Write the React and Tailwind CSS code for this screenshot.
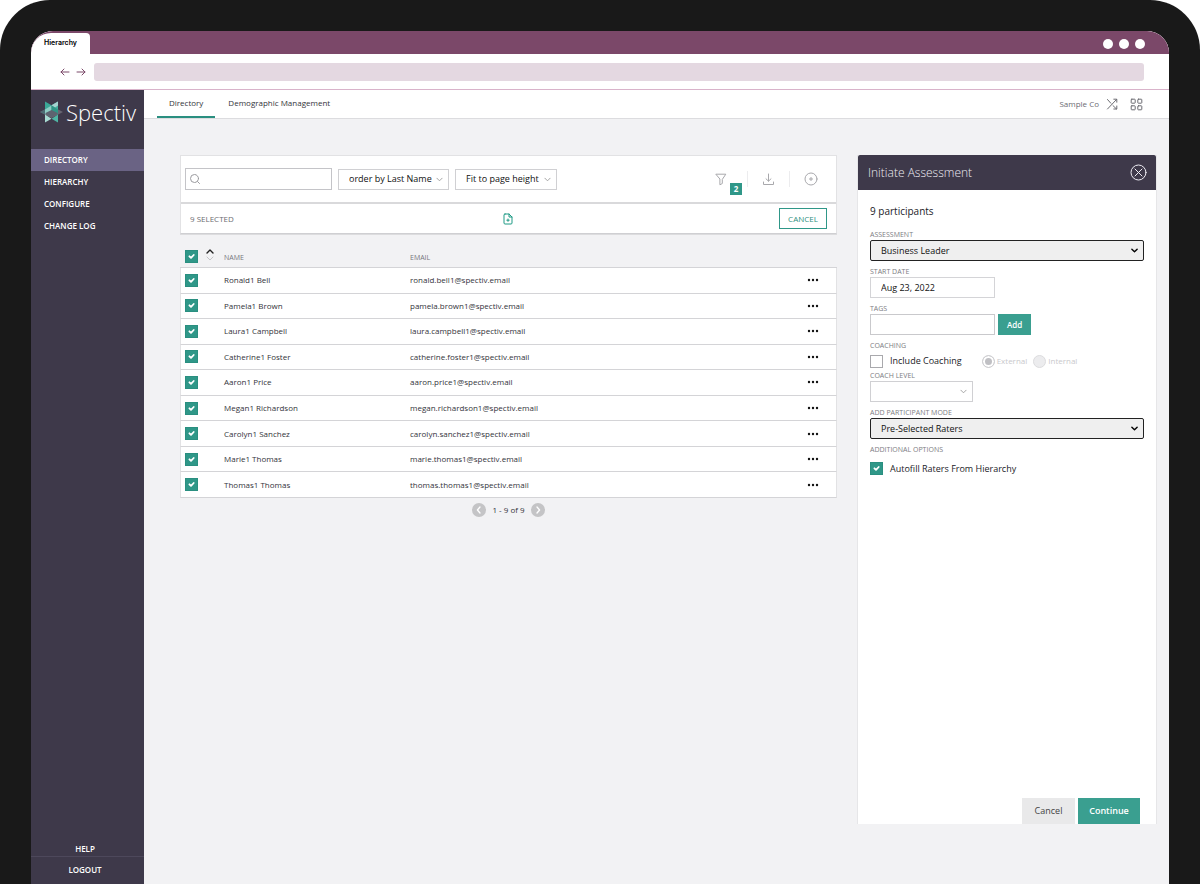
import React from "react";

const people = [
  ["Ronald1 Bell", "ronald.bell1@spectiv.email"],
  ["Pamela1 Brown", "pamela.brown1@spectiv.email"],
  ["Laura1 Campbell", "laura.campbell1@spectiv.email"],
  ["Catherine1 Foster", "catherine.foster1@spectiv.email"],
  ["Aaron1 Price", "aaron.price1@spectiv.email"],
  ["Megan1 Richardson", "megan.richardson1@spectiv.email"],
  ["Carolyn1 Sanchez", "carolyn.sanchez1@spectiv.email"],
  ["Marie1 Thomas", "marie.thomas1@spectiv.email"],
  ["Thomas1 Thomas", "thomas.thomas1@spectiv.email"],
];

function Stroke({ className, children, width = 1, box = "0 0 16 16" }) {
  return (
    <svg
      viewBox={box}
      className={className}
      fill="none"
      stroke="currentColor"
      strokeWidth={width}
      strokeLinecap="round"
      strokeLinejoin="round"
      aria-hidden="true"
    >
      {children}
    </svg>
  );
}

function Check({ label, checked = false }) {
  return (
    <span className="grid size-[13px] shrink-0">
      <input
        type="checkbox"
        aria-label={label}
        defaultChecked={checked}
        className="peer col-start-1 row-start-1 size-[13px] appearance-none border border-[#a9a9ad] bg-white checked:border-[#2a8f80] checked:bg-[#2f9788]"
      />
      <Stroke
        box="0 0 13 13"
        width={1.8}
        className="pointer-events-none invisible col-start-1 row-start-1 size-[13px] text-white peer-checked:visible"
      >
        <path d="M4.4 6.3 6 7.9 8.7 5" />
      </Stroke>
    </span>
  );
}

function Select({ label, value, wide = false, className, id }) {
  return (
    <span className={`grid items-center ${className}`}>
      <select
        id={id}
        aria-label={label}
        className={
          wide
            ? "col-start-1 row-start-1 h-[21px] w-full appearance-none rounded-xs border border-[#222] bg-[#efefef] pl-[10px] text-[9px] font-medium text-[#111]"
            : "col-start-1 row-start-1 h-[21px] w-full appearance-none border border-[#d0d0d3] bg-white pl-[10px] text-[9px] font-medium text-[#111]"
        }
      >
        <option>{value}</option>
      </select>
      {wide ? (
        <Stroke width={1.6} box="0 0 8 8" className="pointer-events-none col-start-1 row-start-1 mr-[6px] size-[7px] justify-self-end text-black">
          <path d="M1 2.5 4 5.5 7 2.5" />
        </Stroke>
      ) : (
        <Stroke box="0 0 8 8" className="pointer-events-none col-start-1 row-start-1 mr-[6px] size-[7px] justify-self-end text-[#999]">
          <path d="M1 2.5 4 5.5 7 2.5" />
        </Stroke>
      )}
    </span>
  );
}

function Logo() {
  return (
    <div className="flex h-[59px] items-start gap-[3px] pt-[10px] pl-[9px]">
      <svg viewBox="0 0 23 24" className="h-6 w-[23px] shrink-0" aria-hidden="true">
        <path d="M0 12 11.5 6 23 12 11.5 18Z" fill="#686672" />
        <path d="M5 1.5 11.5 5.2V12H5Z" fill="#3aa796" />
        <path d="M18 1.5 11.5 5.2V12H18Z" fill="#43ad9c" />
        <path d="M18 1.5 11.5 5.2 15 7.4 18 5.6Z" fill="#a5d3d0" />
        <path d="M5 9.4 11.5 5.6V12L5 14.6Z" fill="#8fcdc4" />
        <path d="M11.5 5.6 18 9.4V14.6L11.5 12Z" fill="#2f9686" />
        <path d="M5 14.6 11.5 18.8 5 22.5Z" fill="#a8dcd3" />
        <path d="M18 14.6 11.5 18.8 18 22.5Z" fill="#4fb5a4" />
        <path d="M5 13.2 11.5 9.9 18 13.2 11.5 17Z" fill="#5d6370" />
        <path d="M0 12 5 9.4V14.6Z" fill="#4d6b73" />
      </svg>
      <span className="text-[22px] leading-[25px] font-light text-white">Spectiv</span>
    </div>
  );
}

function Sidebar() {
  return (
    <aside className="flex w-[113px] shrink-0 flex-col bg-[#3e394a] text-[8px] font-semibold text-white">
      <Logo />
      <nav className="flex flex-col">
        <a href="#directory" className="flex h-[22px] items-center bg-[#6a6384] pl-[13px]">DIRECTORY</a>
        <a href="#hierarchy" className="flex h-[22px] items-center pl-[13px]">HIERARCHY</a>
        <a href="#configure" className="flex h-[22px] items-center pl-[13px]">CONFIGURE</a>
        <a href="#changelog" className="flex h-[22px] items-center pl-[13px]">CHANGE LOG</a>
      </nav>
      <div className="mt-auto flex flex-col text-center">
        <a href="#help" className="border-b border-[#4d485b] pr-[5px] pb-px leading-3">HELP</a>
        <a href="#logout" className="pt-[7px] pr-[5px] pb-2 leading-3">LOGOUT</a>
      </div>
    </aside>
  );
}

function TopNav() {
  return (
    <header className="flex h-[29px] shrink-0 items-stretch justify-between border-b border-[#dcdcdf] bg-white pr-[26px] pl-[13px]">
      <nav className="flex text-[8px] text-[#33333a]">
        <a href="#directory" className="flex items-center border-b-2 border-[#2a8f80] px-3">Directory</a>
        <a href="#demographic" className="flex items-center border-b-2 border-transparent px-[13px]">Demographic Management</a>
      </nav>
      <div className="flex items-center text-[8px] text-[#6c6c72]">
        <span>Sample Co</span>
        <button aria-label="Switch company" className="ml-[7px]">
          <Stroke box="0 0 12 12" className="size-3">
            <path d="M1.5 1.5 4.8 5.2M7 7.6 10.5 11M1.5 11 10.5 1.5M7.8 1.2H10.8V4.2M7.8 11H10.8V8" />
          </Stroke>
        </button>
        <button aria-label="Apps" className="ml-3">
          <Stroke box="0 0 13 13" className="size-[13px]">
            <rect x="1.2" y="1.2" width="4" height="4" rx=".6" />
            <rect x="7.8" y="1.2" width="4" height="4" rx=".6" />
            <rect x="1.2" y="7.8" width="4" height="4" rx=".6" />
            <rect x="7.8" y="7.8" width="4" height="4" rx=".6" />
          </Stroke>
        </button>
      </div>
    </header>
  );
}

function Toolbar() {
  return (
    <div className="border border-[#e2e2e4] border-b-[#cfcfd2] bg-white shadow-[0_1px_0_#dcdcde]">
      <div className="flex h-[48px] items-center border-b-2 border-[#d9d9db] pr-[18px] pl-1">
        <label className="grid h-[22px] w-[147px] items-center">
          <input
            type="text"
            aria-label="Search"
            className="col-start-1 row-start-1 h-full w-full border border-[#c4c4c8] bg-white pl-5 text-[9px]"
          />
          <Stroke box="0 0 12 12" className="pointer-events-none col-start-1 row-start-1 ml-1 size-3 text-[#9a9a9e]">
            <circle cx="5.5" cy="5.5" r="4" />
            <path d="M8.5 8.5 10.5 10.5" />
          </Stroke>
        </label>
        <Select label="Order" value="order by Last Name" className="ml-[6px] w-[111px]" />
        <Select label="Page size" value="Fit to page height" className="ml-[6px] w-[102px]" />
        <div className="ml-auto flex items-center text-[#a8a8ac]">
          <button aria-label="Filter" className="relative mr-5">
            <Stroke box="0 0 12 13" className="h-[13px] w-[12px]">
              <path d="M1.2 1.2H10.8L7.3 6.4V10.5L4.9 11.8V6.4Z" />
            </Stroke>
            <span className="absolute top-[10px] left-[15px] grid size-3 place-items-center bg-[#2f9788] text-[8px] font-bold text-white">2</span>
          </button>
          <span className="mr-[14px] h-4 w-px bg-[#ececee]" />
          <button aria-label="Download">
            <Stroke box="0 0 13 13" className="size-[13px]">
              <path d="M6.5 1V8M4 5.8 6.5 8.2 9 5.8M1.5 9V11.5H11.5V9" />
            </Stroke>
          </button>
          <span className="mx-[14px] h-4 w-px bg-[#ececee]" />
          <button aria-label="Add">
            <Stroke box="0 0 14 14" className="size-[14px]">
              <circle cx="7" cy="7" r="6" />
              <path d="M7 5.4V8.6M5.4 7H8.6" />
            </Stroke>
          </button>
        </div>
      </div>
      <div className="grid h-[29px] grid-cols-3 items-center px-[9px] text-[8px]">
        <span className="text-[#6c6c72]">9 SELECTED</span>
        <button aria-label="New assessment" className="justify-self-center text-[#1f9a85]">
          <Stroke box="0 0 10 12" className="h-3 w-[10px]">
            <path d="M2 1H6L9 4V10Q9 11 8 11H2Q1 11 1 10V2Q1 1 2 1ZM6 1V4H9M5 6V8.4M3.8 7.2H6.2" />
          </Stroke>
        </button>
        <button className="h-[21px] w-12 justify-self-end border border-[#2f9788] text-[#2f8f80]">CANCEL</button>
      </div>
    </div>
  );
}

function Directory() {
  return (
    <section className="min-w-0 grow">
      <Toolbar />
      <table className="mt-[10px] h-[254px] w-full border-separate border-spacing-0 text-left text-[8px] text-[#33333a]">
        <thead className="text-[7px] text-[#77777d]">
          <tr>
            <th className="h-6 w-11 border-b border-[#d4d4d7] pt-[2px] pl-[5px] font-normal">
              <span className="flex items-center gap-[7px]">
                <Check label="Select all" checked />
                <button aria-label="Sort by name" className="mb-1">
                  <Stroke box="0 0 10 14" className="h-[14px] w-[10px]">
                    <path d="M2 5 5 2 8 5" stroke="#222" strokeWidth="1.4" />
                    <path d="M2 9 5 12 8 9" stroke="#c4c4c8" />
                  </Stroke>
                </button>
              </span>
            </th>
            <th className="w-[186px] border-b border-[#d4d4d7] pt-[5px] font-normal">NAME</th>
            <th className="border-b border-[#d4d4d7] pt-[5px] font-normal">EMAIL</th>
            <th className="w-10 border-b border-[#d4d4d7]" aria-label="Actions" />
          </tr>
        </thead>
        <tbody>
          {people.map(([name, email]) => (
            <tr key={email} className="bg-white">
              <td className="h-[25px] border-b border-l border-b-[#d4d4d7] border-l-[#e2e2e4] pl-1">
                <Check label={`Select ${name}`} checked />
              </td>
              <td className="border-b border-[#d4d4d7]">{name}</td>
              <td className="border-b border-[#d4d4d7]">{email}</td>
              <td className="border-r border-b border-r-[#e2e2e4] border-b-[#d4d4d7] pr-[17px]">
                <button aria-label={`Actions for ${name}`} className="ml-auto block">
                  <svg viewBox="0 0 12 4" className="h-1 w-3" fill="#111">
                    <circle cx="2" cy="2" r="1.2" />
                    <circle cx="6" cy="2" r="1.2" />
                    <circle cx="10" cy="2" r="1.2" />
                  </svg>
                </button>
              </td>
            </tr>
          ))}
        </tbody>
      </table>
      <div className="mt-[5px] flex items-center justify-center gap-[6px] text-[8px] text-[#33333a]">
        <button aria-label="Previous page" className="rounded-full bg-[#c4c4c6] text-white">
          <Stroke box="0 0 14 14" className="size-[14px]" width={1.3}>
            <path d="M8 4 5.4 7 8 10" />
          </Stroke>
        </button>
        <span>1 - 9 of 9</span>
        <button aria-label="Next page" className="rounded-full bg-[#c4c4c6] text-white">
          <Stroke box="0 0 14 14" className="size-[14px]" width={1.3}>
            <path d="M6 4 8.6 7 6 10" />
          </Stroke>
        </button>
      </div>
    </section>
  );
}

function FieldLabel({ htmlFor, children }) {
  return (
    <label htmlFor={htmlFor} className="block text-[7px] leading-[10px] text-[#7c7c82]">
      {children}
    </label>
  );
}

function AssessmentPanel() {
  return (
    <form className="flex w-[300px] shrink-0 flex-col border-x border-[#e6e6e8] bg-white" onSubmit={(e) => e.preventDefault()}>
      <div className="flex h-[35px] shrink-0 items-center justify-between rounded-t-xs bg-[#3e394a] pr-[9px] pl-[10px] text-[12px] font-light text-[#efedf4]">
        <h2>Initiate Assessment</h2>
        <button type="button" aria-label="Close">
          <Stroke box="0 0 17 17" className="size-[17px]">
            <circle cx="8.5" cy="8.5" r="7.5" />
            <path d="M5 5 12 12M12 5 5 12" />
          </Stroke>
        </button>
      </div>
      <div className="flex grow flex-col px-3 pt-[14px] text-[9px] text-[#222228]">
        <p className="mb-3 text-[10px] leading-[14px]">9 participants</p>
        <FieldLabel htmlFor="assessment">ASSESSMENT</FieldLabel>
        <Select id="assessment" label="Assessment" value="Business Leader" wide className="mb-[6px]" />
        <FieldLabel htmlFor="start">START DATE</FieldLabel>
        <input
          id="start"
          type="text"
          defaultValue="Aug 23, 2022"
          className="mb-[6px] h-[21px] w-[125px] border border-[#d4d4d7] pl-[10px] text-[9px] font-medium text-[#111]"
        />
        <FieldLabel htmlFor="tags">TAGS</FieldLabel>
        <div className="mb-[6px] flex gap-[3px]">
          <input id="tags" type="text" className="h-[21px] w-[125px] border border-[#c9c9cc] pl-[10px]" />
          <button type="button" className="h-[21px] w-[33px] bg-[#3a9f90] text-[8px] font-semibold text-white">Add</button>
        </div>
        <p className="text-[7px] leading-[10px] text-[#7c7c82]">COACHING</p>
        <div className="flex h-5 items-center">
          <label className="flex items-center gap-[7px] font-medium">
            <Check label="Include Coaching" />
            Include Coaching
          </label>
          <label className="ml-5 flex items-center gap-[2px] text-[8px] text-[#c9c9cc]">
            <input
              type="radio"
              name="coach"
              disabled
              defaultChecked
              className="size-[13px] appearance-none rounded-full border border-[#cfcfd2] bg-[#c0c0c4] shadow-[inset_0_0_0_2px_white]"
            />
            External
          </label>
          <label className="ml-[6px] flex items-center gap-[2px] text-[8px] text-[#c9c9cc]">
            <input type="radio" name="coach" disabled className="size-[13px] appearance-none rounded-full border border-[#dcdcde] bg-[#ececee]" />
            Internal
          </label>
        </div>
        <FieldLabel htmlFor="level">COACH LEVEL</FieldLabel>
        <Select id="level" label="Coach level" value="" className="mb-[6px] w-[103px]" />
        <FieldLabel htmlFor="mode">ADD PARTICIPANT MODE</FieldLabel>
        <Select id="mode" label="Add participant mode" value="Pre-Selected Raters" wide className="mb-[6px]" />
        <p className="text-[7px] leading-[10px] text-[#7c7c82]">ADDITIONAL OPTIONS</p>
        <label className="mt-[7px] flex items-center gap-[7px] font-medium">
          <Check label="Autofill Raters From Hierarchy" checked />
          Autofill Raters From Hierarchy
        </label>
        <div className="mt-auto flex justify-end gap-[3px] pr-1">
          <button type="button" className="h-[26px] w-[53px] bg-[#e9e9ea] text-[9px] text-[#444]">Cancel</button>
          <button className="h-[26px] w-[62px] bg-[#3a9f90] text-[9px] font-semibold text-white">Continue</button>
        </div>
      </div>
    </form>
  );
}

function BrowserChrome() {
  return (
    <div className="shrink-0 border-b border-[#d9b3ca] bg-white">
      <div className="flex h-[23px] items-stretch justify-between bg-[#7b4869] pt-[2px]">
        <div className="w-[59px] rounded-tl-[20px] rounded-tr bg-white pl-[13px] font-['Inter',sans-serif] text-[7px] leading-[19px] font-semibold text-black">
          Hierarchy
        </div>
        <div className="flex items-center gap-[6px] pr-6">
          <span className="size-[10px] rounded-full bg-white" />
          <span className="size-[10px] rounded-full bg-white" />
          <span className="size-[10px] rounded-full bg-white" />
        </div>
      </div>
      <div className="flex h-[35px] items-center pr-[25px] pl-[29px] text-[#7b4869]">
        <button aria-label="Back">
          <Stroke box="0 0 10 10" className="size-[10px]">
            <path d="M9 5H1M4 2 1 5 4 8" />
          </Stroke>
        </button>
        <button aria-label="Forward" className="ml-[6px]">
          <Stroke box="0 0 10 10" className="size-[10px]">
            <path d="M1 5H9M6 2 9 5 6 8" />
          </Stroke>
        </button>
        <input type="text" aria-label="Address" className="ml-2 h-[18px] grow rounded-[3px] bg-[#e4d8e1] px-2 text-[9px]" />
      </div>
    </div>
  );
}

export default function App() {
  return (
    <div className="bg-white font-['Open_Sans',sans-serif]">
      <div className="flex min-h-screen flex-col rounded-t-[50px] bg-[#191919] px-[31px] pt-[31px]">
        <div className="flex grow flex-col overflow-hidden rounded-t-[22px] bg-[#f2f2f4]">
          <BrowserChrome />
          <div className="flex grow">
            <Sidebar />
            <div className="flex min-w-0 grow flex-col">
              <TopNav />
              <main className="flex grow gap-5 pt-9 pr-3 pb-[60px] pl-9">
                <Directory />
                <AssessmentPanel />
              </main>
            </div>
          </div>
        </div>
      </div>
    </div>
  );
}
